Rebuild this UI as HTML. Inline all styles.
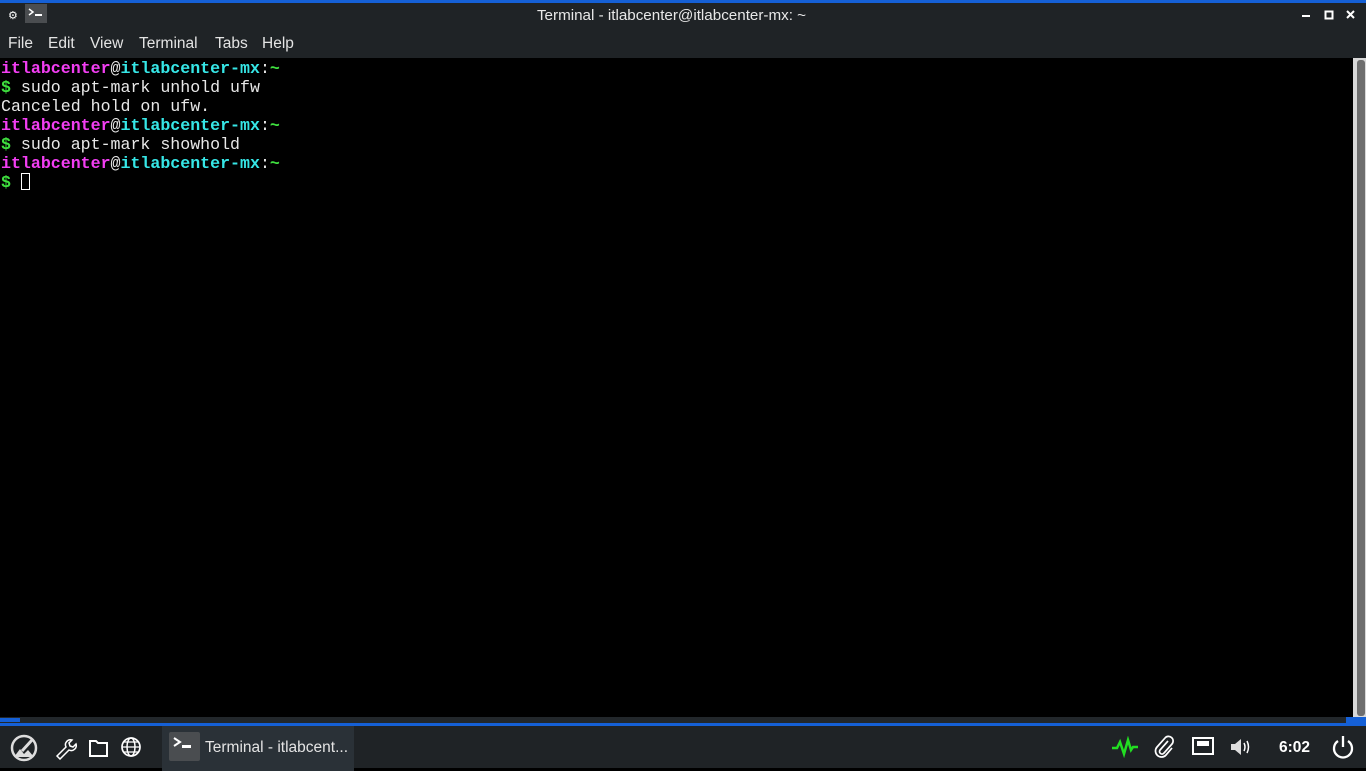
<!DOCTYPE html>
<html><head><meta charset="utf-8"><style>
body{margin:0;width:1366px;height:768px;background:#000;overflow:hidden;position:relative;font-family:"Liberation Sans",sans-serif}
.title{position:absolute;left:0;top:0;width:1366px;height:58px;background:#1f2326;border-top:3px solid #1560d6;box-sizing:border-box}
.tt{position:absolute;top:4px;left:533px;width:277px;text-align:center;color:#e8e8e8;font-size:15.2px;white-space:nowrap}
.menu span{position:absolute;top:32px;color:#e4e4e4;font-size:15.5px}
.term{position:absolute;left:1px;top:59px;font-family:"Liberation Mono",monospace;font-size:16.6px;line-height:19px;color:#e8e8e8;white-space:pre;font-weight:normal}
.m{color:#f23ef2;font-weight:bold}.c{color:#36e6e6;font-weight:bold}.g{color:#3fe03f;font-weight:bold}
.cur{display:inline-block;width:9px;height:17px;border:1.5px solid #fff;vertical-align:-3px;box-sizing:border-box}
.sb{position:absolute;left:1353px;top:58px;width:13px;height:660px;background:#d8d8d8}
.th{position:absolute;left:1357px;top:60px;width:8px;height:656px;background:#6e6e6e;border-radius:3px}
.hb{position:absolute;left:0;top:717px;width:1366px;height:6px;background:#22272b}
.task{position:absolute;left:0;top:723px;width:1366px;height:45px;background:#1f2326;border-top:3px solid #1560d6;box-sizing:border-box}
.btn{position:absolute;left:162px;top:-3px;width:192px;height:45px;background:#2a3137;border-top:3px solid #1560d6}
.ic{position:absolute}
</style></head><body>
<div class="title">
<div class="ic" style="left:8px;top:6px;color:#fff;font-size:11px">⚙</div>
<div class="ic" style="left:25px;top:1px;width:22px;height:19px;background:#4a4d50"><svg width="22" height="19"><path d="M4 5l4 3-4 3" stroke="#fff" fill="none" stroke-width="1.5"/><rect x="10" y="10" width="7" height="2" fill="#fff"/></svg></div>
<div class="tt">Terminal - itlabcenter@itlabcenter-mx: ~</div>
<svg class="ic" style="left:1296px;top:6px" width="70" height="14"><rect x="6" y="6" width="8" height="2" fill="#fff"/><rect x="29.5" y="2.5" width="7" height="7" stroke="#fff" stroke-width="2" fill="none"/><path d="M51 2l7 7M58 2l-7 7" stroke="#fff" stroke-width="2"/></svg>
<div class="menu"><span style="left:8px">File</span><span style="left:48px">Edit</span><span style="left:90px">View</span><span style="left:139px">Terminal</span><span style="left:215px">Tabs</span><span style="left:262px">Help</span></div>
</div>
<div class="term"><span class="m">itlabcenter</span>@<span class="c">itlabcenter-mx</span>:<span class="g">~</span>
<span class="g">$</span> sudo apt-mark unhold ufw
Canceled hold on ufw.
<span class="m">itlabcenter</span>@<span class="c">itlabcenter-mx</span>:<span class="g">~</span>
<span class="g">$</span> sudo apt-mark showhold
<span class="m">itlabcenter</span>@<span class="c">itlabcenter-mx</span>:<span class="g">~</span>
<span class="g">$</span> <span class="cur"></span></div>
<div class="sb"></div><div class="th"></div>
<div class="hb"><div style="width:20px;height:4px;background:#1560d6;margin-top:1px"></div><div style="position:absolute;right:0;top:0;width:20px;height:6px;background:#1560d6"></div></div>
<div class="task">
<svg class="ic" style="left:9px;top:7px" width="30" height="30"><circle cx="15" cy="15" r="12" stroke="#ddd" stroke-width="2.5" fill="none"/><path d="M5 24l6-8 4 5 4-4 6 7z" fill="#ddd"/><path d="M13 18l10-11" stroke="#ddd" stroke-width="3"/></svg>
<svg class="ic" style="left:53px;top:10px" width="24" height="24"><path d="M4 20l9-9a5 5 0 0 1 6-7l-3 3 1 3 3 1 3-3a5 5 0 0 1-7 6l-9 9z" stroke="#fff" stroke-width="1.5" fill="none"/></svg>
<svg class="ic" style="left:88px;top:12px" width="22" height="20"><path d="M2 3h6l2 2h9v13H2z" stroke="#fff" stroke-width="2" fill="none"/></svg>
<svg class="ic" style="left:120px;top:10px" width="22" height="22"><circle cx="11" cy="11" r="9" stroke="#fff" stroke-width="1.7" fill="none"/><ellipse cx="11" cy="11" rx="4" ry="9" stroke="#fff" stroke-width="1.5" fill="none"/><path d="M2 11h18M4 6h14M4 16h14" stroke="#fff" stroke-width="1.3"/></svg>
<div class="btn">
<div class="ic" style="left:7px;top:6px;width:31px;height:29px;background:#4a4d50;border-radius:2px"><svg width="31" height="29"><path d="M5 6l6 4-6 4" stroke="#fff" fill="none" stroke-width="2"/><rect x="13" y="13" width="9" height="3" fill="#fff"/></svg></div>
<div class="ic" style="left:43px;top:13px;color:#e4e4e4;font-size:15.5px;white-space:nowrap">Terminal - itlabcent...</div>
</div>
<svg class="ic" style="left:1110px;top:10px" width="30" height="22"><path d="M2 12h5l3-6 4 12 4-14 3 10 2-3h5" stroke="#22dd22" stroke-width="2.5" fill="none"/></svg>
<svg class="ic" style="left:1153px;top:9px" width="22" height="24"><path d="M15 6l-8 9a2.5 2.5 0 0 0 4 3l8-9a4.5 4.5 0 0 0-7-6l-8 9a6 6 0 0 0 9 8l6-7" stroke="#fff" stroke-width="1.7" fill="none"/></svg>
<svg class="ic" style="left:1192px;top:11px" width="22" height="19"><rect x="1" y="1" width="20" height="16" stroke="#fff" stroke-width="2" fill="none"/><path d="M5 4h12v5H5z" fill="#fff"/></svg>
<svg class="ic" style="left:1229px;top:11px" width="24" height="20"><path d="M2 7h4l6-5v16l-6-5H2z" fill="#ddd"/><path d="M15 6q2 4 0 8M18 4q3 6 0 12" stroke="#fff" stroke-width="1.5" fill="none"/></svg>
<div class="ic" style="left:1279px;top:13px;color:#fff;font-size:15.5px;font-weight:bold">6:02</div>
<svg class="ic" style="left:1330px;top:8px" width="26" height="26"><path d="M8 7a9 9 0 1 0 10 0" stroke="#fff" stroke-width="2.3" fill="none"/><path d="M13 2v11" stroke="#fff" stroke-width="2.3"/></svg>
</div>
</body></html>
